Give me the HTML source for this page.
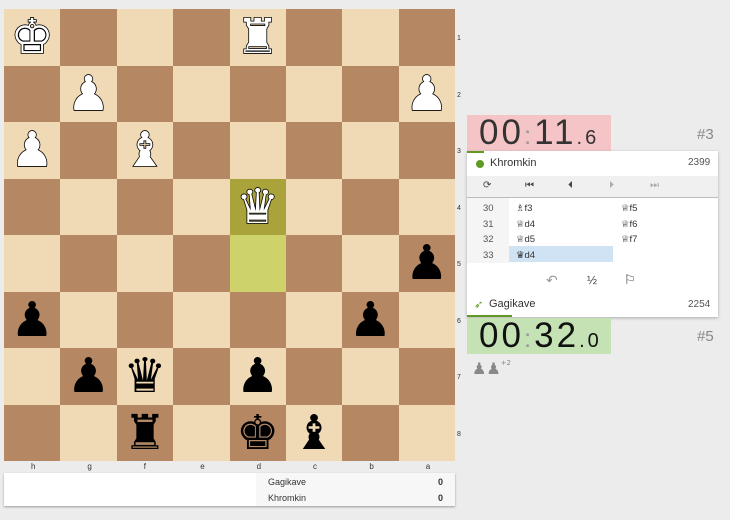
<!DOCTYPE html><html><head><style>
body{margin:0;width:730px;height:520px;background:#ececec;font-family:"Liberation Sans","DejaVu Sans",sans-serif;position:relative;overflow:hidden}
#b{position:absolute;left:4px;top:9px;width:451px;height:452px;display:grid;grid-template-columns:repeat(8,1fr);grid-template-rows:repeat(8,1fr)}
.s{display:flex;align-items:center;justify-content:center;font-family:"DejaVu Sans",sans-serif;font-size:48px;line-height:1;color:#000}
.l{background:#f0d9b5}.d{background:#b58863}
.w{color:#fff;-webkit-text-stroke:1.6px #000;paint-order:stroke fill}
.fl{position:absolute;top:462px;font-size:8px;color:#333}
.rk{position:absolute;left:457px;font-size:7px;color:#333}
.ab{position:absolute}
.clk{font-size:35px;letter-spacing:3px;line-height:36px;padding-left:12px;box-sizing:border-box}
</style></head><body>
<div id="b"></div>
<script>
var P={"0,0":"w♚","0,4":"w♜","1,1":"w♟","1,7":"w♟","2,0":"w♟","2,2":"w♝","3,4":"w♛","4,7":"♟","5,0":"♟","5,6":"♟","6,1":"♟","6,2":"♛","6,4":"♟","7,2":"♜","7,4":"♚","7,5":"♝"};
var h="";for(var r=0;r<8;r++)for(var c=0;c<8;c++){var cl=(r+c)%2?"d":"l";var st="";if(r==3&&c==4)st="background:#aaa23a";if(r==4&&c==4)st="background:#cdd26a";var p=P[r+","+c]||"";var inner="";if(p){if(p[0]=="w")inner='<span class="w">'+p.slice(1)+'</span>';else inner=p;}h+='<div class="s '+cl+'" style="'+st+'">'+inner+'</div>';}
document.getElementById("b").innerHTML=h;
var f="hgfedcba";for(var i=0;i<8;i++){document.write('<div class="fl" style="left:'+(4+i*56.4+27)+'px">'+f[i]+'</div><div class="rk" style="top:'+(9+i*56.5+26)+'px">'+(i+1)+'</div>');}
</script>
<div class="ab" style="left:4px;top:473px;width:451px;height:33px;background:#fff;box-shadow:0 1px 2px #999"></div>
<div class="ab" style="left:256px;top:473px;width:199px;height:33px;background:#f7f7f7;font-size:9px;color:#333">
<div style="position:absolute;left:12px;top:4px">Gagikave</div><div style="position:absolute;right:12px;top:4px;font-weight:bold">0</div>
<div style="position:absolute;left:12px;top:20px">Khromkin</div><div style="position:absolute;right:12px;top:20px;font-weight:bold">0</div></div>
<div class="ab clk" style="left:467px;top:115px;width:144px;height:36px;background:#f4c4c6;color:#333">00<span style="color:#999;font-size:26px">:</span>11<span style="font-size:20px">.6</span></div>
<div class="ab" style="left:697px;top:126px;font-size:15px;color:#888">#3</div>
<div class="ab" style="left:467px;top:151px;width:251px;height:166px;background:#fff;box-shadow:0 1px 3px #aaa"></div>
<div class="ab" style="left:467px;top:151px;width:17px;height:2px;background:#629924"></div>
<div class="ab" style="left:476px;top:160px;width:8px;height:8px;border-radius:50%;background:#629924"></div>
<div class="ab" style="left:490px;top:157px;font-size:11px;color:#333">Khromkin</div>
<div class="ab" style="left:688px;top:157px;font-size:10px;color:#555">2399</div>
<div class="ab" style="left:467px;top:176px;width:251px;height:21px;background:#f0f0f0;border-bottom:1px solid #bbb;font-size:10px;color:#444">
<span style="position:absolute;left:16px;top:4px">⟳</span><span style="position:absolute;left:58px;top:4px">⏮</span><span style="position:absolute;left:101px;top:4px">⏴</span><span style="position:absolute;left:142px;top:4px;color:#aaa">⏵</span><span style="position:absolute;left:183px;top:4px;color:#aaa">⏭</span></div>
<div class="ab" style="left:467px;top:198px;width:42px;height:65px;background:#f5f5f5"></div>
<div class="ab" style="left:509px;top:246px;width:104px;height:16px;background:#cfe3f5"></div>
<div class="ab" style="font-size:9.5px;color:#555;left:483px;top:201px;line-height:15.7px">30<br>31<br>32<br>33</div>
<div class="ab" style="font-size:9.5px;color:#333;left:516px;top:201px;line-height:15.7px">♗f3<br>♕d4<br>♕d5<br>♛d4</div>
<div class="ab" style="font-size:9.5px;color:#333;left:621px;top:201px;line-height:15.7px">♕f5<br>♕f6<br>♕f7</div>
<div class="ab" style="left:546px;top:272px;font-size:14px;color:#999">↶</div>
<div class="ab" style="left:587px;top:273px;font-size:12px;color:#444">½</div>
<div class="ab" style="left:624px;top:272px;font-size:13px;color:#444">⚐</div>
<div class="ab" style="left:474px;top:298px;font-size:11px;color:#629924">➶</div>
<div class="ab" style="left:489px;top:298px;font-size:11px;color:#333">Gagikave</div>
<div class="ab" style="left:688px;top:299px;font-size:10px;color:#555">2254</div>
<div class="ab" style="left:467px;top:315px;width:45px;height:2px;background:#629924"></div>
<div class="ab clk" style="left:467px;top:318px;width:144px;height:36px;background:#c4e2b4;color:#111">00<span style="color:#999;font-size:26px">:</span>32<span style="font-size:20px">.0</span></div>
<div class="ab" style="left:697px;top:328px;font-size:15px;color:#888">#5</div>
<div class="ab" style="left:472px;top:359px;font-size:16px;color:#888;font-family:'DejaVu Sans'">♟♟<span style="font-size:7px;vertical-align:top">+2</span></div>
</body></html>
